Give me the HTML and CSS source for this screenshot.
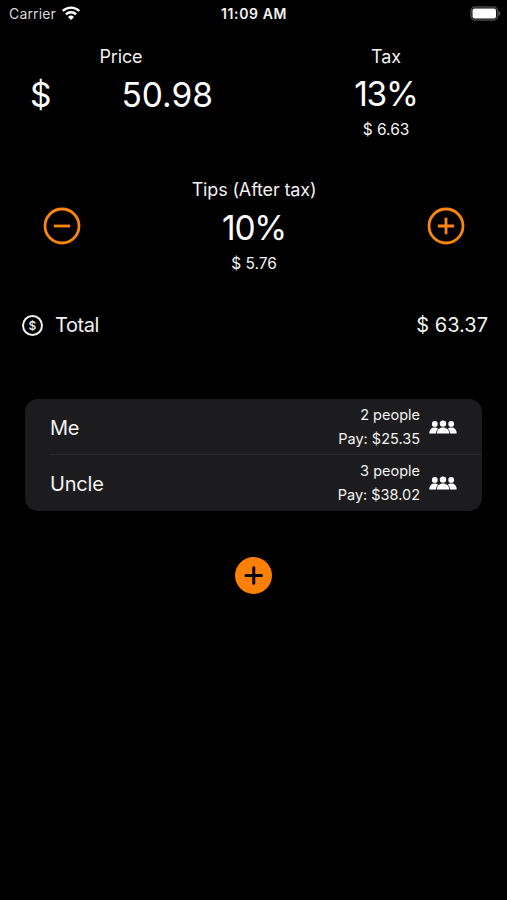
FILE: index.html
```html
<!DOCTYPE html>
<html lang="en">
<head>
  <meta charset="UTF-8" />
  <meta name="viewport" content="width=device-width, initial-scale=1" />
  <title>Tip Calculator</title>
  <link rel="stylesheet" href="styles.css">
</head>
<body>
  <header class="status-bar">
    <div class="carrier">
      <span class="carrier-name">Carrier</span>
      <svg class="wifi" viewBox="0 0 18 14">
        <path d="M.8 5a11.6 11.6 0 0 1 16.4 0" />
        <path d="M3.9 8.3a7.2 7.2 0 0 1 10.2 0" />
        <path class="wifi-dot" d="M9 13.9 6 10.9a4.3 4.3 0 0 1 6 0z" />
      </svg>
    </div>
    <span class="time">11:09 AM</span>
    <svg class="battery" viewBox="0 0 31 15">
      <rect class="battery-case" x="1" y="1" width="26.5" height="13" rx="4" />
      <rect class="battery-level" x="2.5" y="2.5" width="23.5" height="10" rx="2" />
      <path class="battery-tip" d="M28.5 5c2.4 1 2.4 4 0 5z" />
    </svg>
  </header>

  <main>
    <section class="amounts">
      <div class="price">
        <div class="label">Price</div>
        <div class="price-input">
          <span>$</span>
          <span class="price-value">50.98</span>
        </div>
      </div>
      <div class="tax">
        <div class="label">Tax</div>
        <div class="value">13%</div>
        <div class="sub">$ 6.63</div>
      </div>
    </section>

    <section class="tips">
      <button class="round-btn" aria-label="Less tip">
        <svg viewBox="0 0 38 38">
          <circle cx="19" cy="19" r="17" />
          <path d="M10.8 19h16.4" />
        </svg>
      </button>
      <div class="tips-info">
        <div class="label">Tips (After tax)</div>
        <div class="value">10%</div>
        <div class="sub">$ 5.76</div>
      </div>
      <button class="round-btn" aria-label="More tip">
        <svg viewBox="0 0 38 38">
          <circle cx="19" cy="19" r="17" />
          <path d="M10.8 19h16.4M19 10.8v16.4" />
        </svg>
      </button>
    </section>

    <section class="total">
      <span class="coin">$</span>
      <span class="total-label">Total</span>
      <span class="total-value">$ 63.37</span>
    </section>

    <ul class="payers">
      <li class="payer">
        <span class="payer-name">Me</span>
        <div class="payer-info">
          <div>2 people</div>
          <div>Pay: $25.35</div>
        </div>
        <svg class="people" viewBox="0 0 28 14">
          <circle cx="5.8" cy="3.9" r="2.9" />
          <circle cx="22.2" cy="3.9" r="2.9" />
          <path d="M.3 13.4C.3 10 2.4 7.6 5.4 7.6c1.6 0 2.9.4 3.8 1.1C7.7 9.9 7.1 11.6 7 13.4z" />
          <path d="M27.7 13.4c0-3.4-2.1-5.8-5.1-5.8-1.6 0-2.9.4-3.8 1.1 1.5 1.2 2.1 2.9 2.2 4.7z" />
          <circle cx="14" cy="3.6" r="3.2" />
          <path d="M7.8 13.4c0-3.6 2.7-5.8 6.2-5.8s6.2 2.2 6.2 5.8z" />
        </svg>
      </li>
      <li class="payer">
        <span class="payer-name">Uncle</span>
        <div class="payer-info">
          <div>3 people</div>
          <div>Pay: $38.02</div>
        </div>
        <svg class="people" viewBox="0 0 28 14">
          <circle cx="5.8" cy="3.9" r="2.9" />
          <circle cx="22.2" cy="3.9" r="2.9" />
          <path d="M.3 13.4C.3 10 2.4 7.6 5.4 7.6c1.6 0 2.9.4 3.8 1.1C7.7 9.9 7.1 11.6 7 13.4z" />
          <path d="M27.7 13.4c0-3.4-2.1-5.8-5.1-5.8-1.6 0-2.9.4-3.8 1.1 1.5 1.2 2.1 2.9 2.2 4.7z" />
          <circle cx="14" cy="3.6" r="3.2" />
          <path d="M7.8 13.4c0-3.6 2.7-5.8 6.2-5.8s6.2 2.2 6.2 5.8z" />
        </svg>
      </li>
    </ul>

    <button class="add-btn" aria-label="Add payer">
      <svg viewBox="0 0 37 37">
        <path d="M11 18.5h15.5M18.75 10.75v15.5" />
      </svg>
    </button>
  </main>
</body>
</html>
```
FILE: styles.css
```css
/* Reset & base */
* {
  box-sizing: border-box;
}
body {
  margin: 0;
  min-height: 100vh;
  background: #000;
  color: #f2f2f2;
  font-family: Inter, "Liberation Sans", sans-serif;
}
button {
  padding: 0;
  border: none;
  background: none;
  cursor: pointer;
}
svg {
  display: block;
}

/* Status bar */
.status-bar {
  display: grid;
  grid-template-columns: 1fr auto 1fr;
  align-items: center;
  height: 28px;
  padding: 0 6px 0 9px;
  font-size: 14px;
  line-height: 18px;
}
.carrier {
  display: flex;
  align-items: center;
  gap: 6px;
}
.carrier-name {
  margin-top: -1px;
  color: #d8d8d8;
  letter-spacing: 0.15px;
}
.wifi {
  width: 18px;
  height: 14px;
  margin-top: -3px;
  fill: none;
  stroke: #fff;
  stroke-width: 2.4;
}
.wifi .wifi-dot {
  fill: #fff;
  stroke: none;
}
.time {
  margin-top: -1px;
  padding-right: 2px;
  font-weight: 600;
  letter-spacing: 0.6px;
}
.battery {
  justify-self: end;
  width: 31px;
  height: 15px;
  margin-top: -2px;
}
.battery-case {
  fill: none;
  stroke: #4a4a4d;
  stroke-width: 1.5;
}
.battery-level {
  fill: #fff;
}
.battery-tip {
  fill: #5a5a5d;
}

/* Shared text sizes */
.label {
  font-size: 18px;
  line-height: 22px;
  letter-spacing: -0.15px;
}
.value {
  margin-top: 6px;
  font-size: 33.5px;
  line-height: 40px;
  letter-spacing: -1.2px;
  color: #fff;
}
.sub {
  margin-top: 6px;
  font-size: 15.5px;
  line-height: 20px;
}

/* Price and tax */
.amounts {
  display: flex;
  justify-content: space-between;
  height: 134px;
  padding-top: 18px;
  text-align: center;
}
.price,
.tax {
  width: 242px;
}
.price-input {
  display: flex;
  margin-top: 7px;
  padding-left: 30px;
  font-size: 33.5px;
  line-height: 40px;
  color: #fff;
}
.price-value {
  flex: 1;
  padding-left: 41px;
}

/* Tips */
.tips {
  display: flex;
  justify-content: space-between;
  padding: 17px 42px 0 43px;
  text-align: center;
}
.tips-info .value {
  margin-top: 7px;
}
.round-btn {
  width: 38px;
  height: 38px;
  margin-top: 28px;
}
.round-btn svg {
  fill: none;
  stroke: #fb860c;
  stroke-width: 2.8;
}

/* Total */
.total {
  display: flex;
  align-items: center;
  height: 26px;
  margin-top: 38px;
  padding: 0 19px 0 22px;
  font-size: 20px;
}
.coin {
  width: 21px;
  height: 21px;
  margin-right: 12px;
  border: 2px solid #f2f2f2;
  border-radius: 50%;
  font-size: 12px;
  font-weight: 500;
  line-height: 17px;
  text-align: center;
}
.total-label {
  letter-spacing: -0.4px;
}
.total-value {
  margin-left: auto;
}

/* People sharing the bill */
.payers {
  margin: 61px 25px 0;
  padding: 0;
  border-radius: 13px;
  background: #1c1c1e;
  list-style: none;
  overflow: hidden;
}
.payer {
  display: flex;
  align-items: center;
  height: 56px;
  margin-left: 25px;
  padding-right: 25px;
}
.payer + .payer {
  box-shadow: 0 -1px #29292c;
}
.payer-name {
  padding-top: 1px;
  font-size: 20px;
  letter-spacing: -0.2px;
}
.payer-info {
  margin-left: auto;
  font-size: 14.5px;
  line-height: 24px;
  text-align: right;
}
.people {
  width: 28px;
  height: 14px;
  margin-left: 9px;
  fill: #fff;
}

.add-btn {
  display: block;
  width: 37px;
  height: 37px;
  margin: 46px auto 0;
  border-radius: 50%;
  background: #fb8005;
}
.add-btn svg {
  fill: none;
  stroke: #000;
  stroke-width: 3;
  stroke-linecap: round;
}
```
